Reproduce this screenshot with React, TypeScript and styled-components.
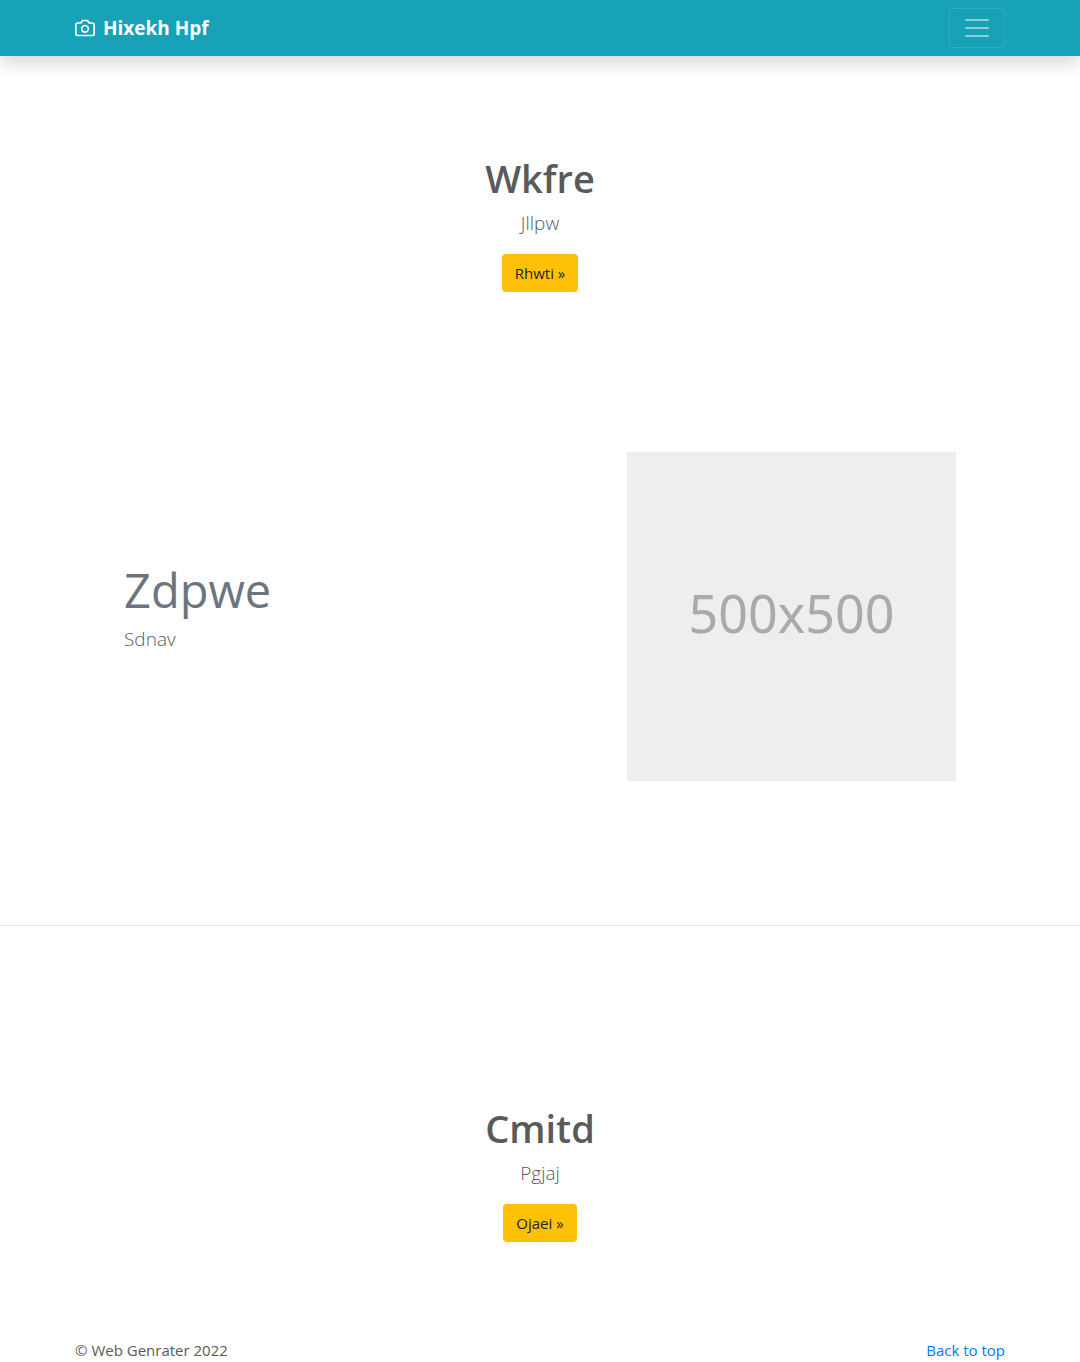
import React from "react";
import styled, { createGlobalStyle } from "styled-components";

const GlobalStyle = createGlobalStyle`
  *, *::before, *::after { box-sizing: border-box; }
  body {
    margin: 0;
    background: #fff;
    color: #5a5a5a;
    font-family: "Segoe UI", "Open Sans", "Noto Sans", sans-serif;
    font-size: 15px;
    line-height: 24px;
  }
  h1, h2, p { margin: 0; }
`;

const Container = styled.div`
  width: 100%;
  max-width: 960px;
  margin: 0 auto;
  padding: 0 15px;
  display: flex;
  align-items: center;
  justify-content: space-between;
`;

const Header = styled.header`
  padding: 8px 0;
  background: #17a2b8;
  box-shadow: 0 8px 16px rgba(0, 0, 0, 0.15);
`;

const Brand = styled.a`
  display: flex;
  align-items: center;
  gap: 8px;
  color: #fff;
  font-size: 19px;
  font-weight: 700;
  line-height: 30px;
  text-decoration: none;
`;

const Toggler = styled.button`
  display: flex;
  align-items: center;
  justify-content: center;
  width: 56px;
  height: 40px;
  padding: 0;
  color: rgba(255, 255, 255, 0.5);
  background: transparent;
  border: 1px solid rgba(255, 255, 255, 0.1);
  border-radius: 4px;
`;

const Callout = styled.section<{ $top?: boolean }>`
  display: flex;
  flex-direction: column;
  align-items: center;
  padding: ${({ $top }) => ($top ? "98px 15px 160px" : "178px 15px 96px")};
`;

const CalloutTitle = styled.h1`
  margin-bottom: 6px;
  font-size: 38px;
  font-weight: 600;
  line-height: 48px;
`;

const Lead = styled.p`
  margin-bottom: 16px;
  font-size: 19px;
  font-weight: 300;
  line-height: 30px;
`;

const ActionButton = styled.button`
  height: 38px;
  padding: 0 13px;
  color: #212529;
  background: #ffc107;
  border: 0;
  border-radius: 4px;
  font: inherit;
`;

const Feature = styled.section`
  display: flex;
  align-items: center;
  justify-content: space-between;
  gap: 32px;
  width: 100%;
  max-width: 960px;
  margin: 0 auto;
  padding: 0 64px 144px;
`;

const FeatureText = styled.div`
  ${Lead} {
    margin-top: 8px;
  }
`;

const FeatureTitle = styled.h2`
  color: #6c757d;
  font-size: 47px;
  font-weight: 400;
  line-height: 52px;
`;

const Placeholder = styled.div`
  display: flex;
  align-items: center;
  justify-content: center;
  flex: 0 1 329px;
  aspect-ratio: 1;
  padding-bottom: 8px;
  color: #aaa;
  background: #eee;
  font-family: "Noto Sans", "Open Sans", sans-serif;
  font-size: 52px;
  line-height: 60px;
`;

const Divider = styled.hr`
  margin: 0;
  border: 0;
  border-top: 1px solid rgba(0, 0, 0, 0.1);
`;

const TopLink = styled.a`
  color: #007bff;
  text-decoration: none;
`;

export default function App() {
  return (
    <>
      <GlobalStyle />
      <Header id="top">
        <Container>
          <Brand href="#">
            <svg
              width="20"
              height="20"
              viewBox="0 0 24 24"
              fill="none"
              stroke="currentColor"
              strokeWidth="2"
              strokeLinecap="round"
              strokeLinejoin="round"
              aria-hidden="true"
            >
              <path d="M23 19a2 2 0 0 1-2 2H3a2 2 0 0 1-2-2V8a2 2 0 0 1 2-2h4l2-3h6l2 3h4a2 2 0 0 1 2 2z" />
              <circle cx="12" cy="13" r="4" />
            </svg>
            Hixekh Hpf
          </Brand>
          <Toggler type="button" aria-label="Toggle navigation">
            <svg width="30" height="30" viewBox="0 0 30 30" stroke="currentColor" strokeWidth="2" strokeLinecap="round" strokeMiterlimit="10" aria-hidden="true">
              <path d="M4 7h22M4 15h22M4 23h22" />
            </svg>
          </Toggler>
        </Container>
      </Header>
      <main>
        <Callout $top>
          <CalloutTitle>Wkfre</CalloutTitle>
          <Lead>Jllpw</Lead>
          <ActionButton type="button">Rhwti »</ActionButton>
        </Callout>
        <Feature>
          <FeatureText>
            <FeatureTitle>Zdpwe</FeatureTitle>
            <Lead>Sdnav</Lead>
          </FeatureText>
          <Placeholder role="img" aria-label="500x500">500x500</Placeholder>
        </Feature>
        <Divider />
        <Callout>
          <CalloutTitle as="h2">Cmitd</CalloutTitle>
          <Lead>Pgjaj</Lead>
          <ActionButton type="button">Ojaei »</ActionButton>
        </Callout>
      </main>
      <footer>
        <Container>
          <p>© Web Genrater 2022</p>
          <TopLink href="#top">Back to top</TopLink>
        </Container>
      </footer>
    </>
  );
}
